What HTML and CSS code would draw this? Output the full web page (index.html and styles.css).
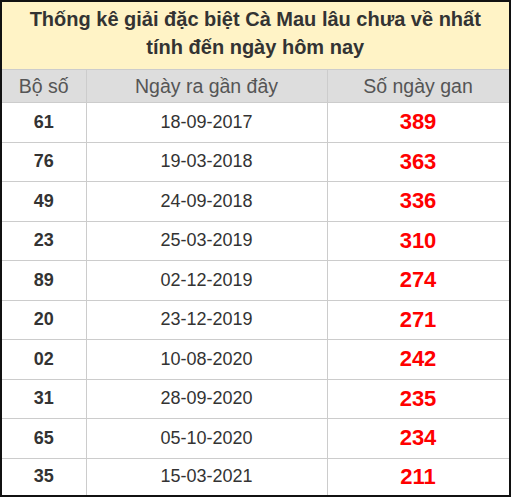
FILE: index.html
```html
<!DOCTYPE html>
<html lang="vi">
<head>
<meta charset="utf-8">
<title>Thống kê giải đặc biệt Cà Mau lâu chưa về nhất</title>
<link rel="stylesheet" href="styles.css">
</head>
<body>
<div class="frame">
  <table class="gan-table">
    <colgroup>
      <col class="c1"><col class="c2"><col class="c3">
    </colgroup>
    <thead>
      <tr><th colspan="3" class="title">Thống kê giải đặc biệt Cà Mau lâu chưa về nhất<br>tính đến ngày hôm nay</th></tr>
      <tr class="head"><th>Bộ số</th><th>Ngày ra gần đây</th><th>Số ngày gan</th></tr>
    </thead>
    <tbody>
      <tr><td class="num">61</td><td class="date">18-09-2017</td><td class="gan">389</td></tr>
      <tr><td class="num">76</td><td class="date">19-03-2018</td><td class="gan">363</td></tr>
      <tr><td class="num">49</td><td class="date">24-09-2018</td><td class="gan">336</td></tr>
      <tr><td class="num">23</td><td class="date">25-03-2019</td><td class="gan">310</td></tr>
      <tr><td class="num">89</td><td class="date">02-12-2019</td><td class="gan">274</td></tr>
      <tr><td class="num">20</td><td class="date">23-12-2019</td><td class="gan">271</td></tr>
      <tr><td class="num">02</td><td class="date">10-08-2020</td><td class="gan">242</td></tr>
      <tr><td class="num">31</td><td class="date">28-09-2020</td><td class="gan">235</td></tr>
      <tr><td class="num">65</td><td class="date">05-10-2020</td><td class="gan">234</td></tr>
      <tr><td class="num">35</td><td class="date">15-03-2021</td><td class="gan">211</td></tr>
    </tbody>
  </table>
</div>
</body>
</html>
```
FILE: styles.css
```css
html, body {
  margin: 0;
  padding: 0;
  background: #fff;
}

.frame {
  box-sizing: border-box;
  width: 511px;
  height: 497px;
  border: 2px solid #111;
  overflow: hidden;
  font-family: "Liberation Sans", Arial, sans-serif;
  color: #333;
}

.gan-table {
  width: 507px;
  border-collapse: collapse;
  table-layout: fixed;
}

.c1 { width: 84px; }
.c2 { width: 241px; }
.c3 { width: 182px; }

.gan-table th,
.gan-table td {
  padding: 0;
  text-align: center;
  border: 1px solid #ccc;
}

.gan-table tr > :first-child { border-left: none; }
.gan-table thead tr:first-child th { border-top: none; }

.title {
  background: #fff3c6;
  font-size: 20px;
  font-weight: bold;
  line-height: 28px;
  padding: 3px 0 8px !important;
  color: #333;
  border-bottom: none !important;
}

.head th {
  background: #ddd;
  color: #555;
  font-size: 19.5px;
  font-weight: normal;
  height: 32px;
}

.gan-table tbody td {
  height: 38.5px;
  font-size: 18px;
}

.gan-table tbody tr:last-child td {
  height: 36px;
}

.num { font-weight: bold; }

.gan {
  color: #f00;
  font-weight: bold;
  font-size: 22px !important;
}
```
